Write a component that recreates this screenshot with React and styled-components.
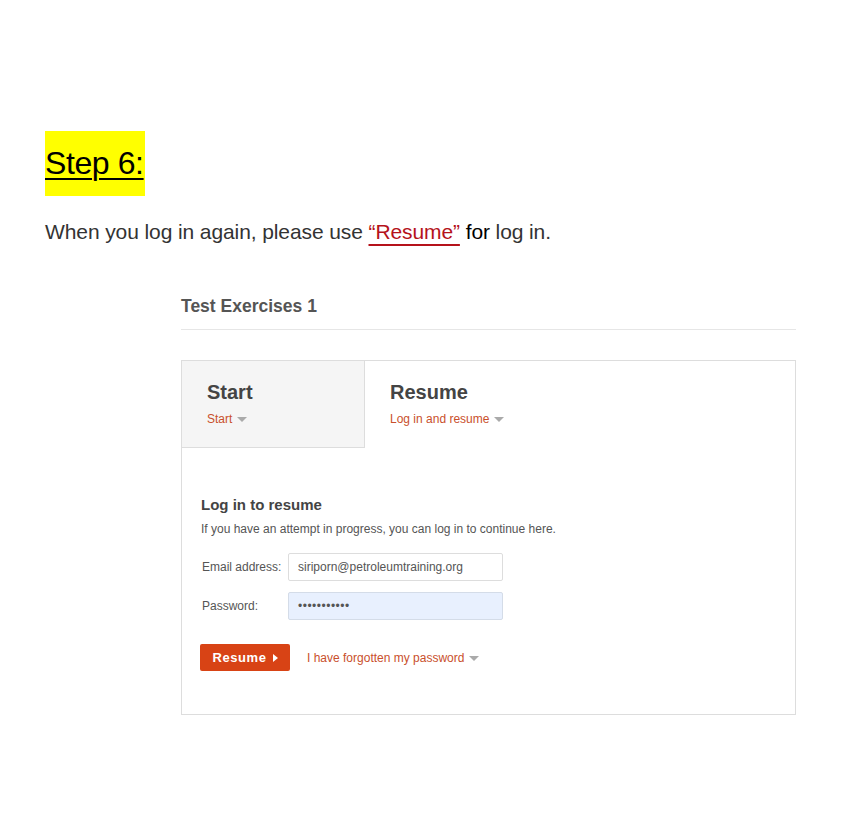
import React from "react"
import styled, { createGlobalStyle } from "styled-components"

const GlobalStyle = createGlobalStyle`
  body {
    margin: 0;
    background: #fff;
    font-family: "Liberation Sans", Arial, sans-serif;
  }
`

const Page = styled.div`
  width: 850px;
  min-height: 836px;
  padding: 131px 0 0 45px;
  box-sizing: border-box;
`

const StepBadge = styled.div`
  display: inline-block;
  background: #ffff00;
  height: 65px;
  line-height: 65px;
  padding-right: 1px;
  font-size: 32px;
  color: #000;
  text-decoration: underline;
  text-decoration-thickness: 2px;
  text-underline-offset: 4px;
  letter-spacing: -0.4px;
`

const Intro = styled.p`
  margin: 24px 0 0;
  font-size: 21px;
  color: #333;
  letter-spacing: -0.1px;

  .resume {
    color: #b5121b;
    text-decoration: underline;
    text-decoration-color: #b5121b;
    text-decoration-thickness: 2px;
    text-underline-offset: 5px;
  }
  .for {
    color: #000;
  }
`

const Shot = styled.div`
  margin: 52px 0 0 136px;
  width: 615px;
`

const Title = styled.h2`
  margin: 0;
  padding-bottom: 12px;
  font-size: 17.5px;
  font-weight: bold;
  color: #555;
  border-bottom: 1px solid #e6e6e6;
`

const Card = styled.div`
  margin-top: 30px;
  border: 1px solid #ddd;
  height: 355px;
  box-sizing: border-box;
`

const Tabs = styled.div`
  display: flex;
  height: 87px;
`

const Tab = styled.div`
  width: ${(p) => p.width}px;
  box-sizing: border-box;
  padding: 20px 0 0 25px;
  background: ${(p) => (p.active ? "#f5f5f5" : "#fff")};
  border-right: ${(p) => (p.active ? "1px solid #ddd" : "none")};
  border-bottom: ${(p) => (p.active ? "1px solid #ddd" : "none")};
`

const TabTitle = styled.div`
  font-size: 20px;
  font-weight: bold;
  color: #444;
`

const TabLink = styled.div`
  margin-top: 8px;
  font-size: 12px;
  color: #c9502c;
  display: flex;
  align-items: center;
  gap: 5px;
`

const Caret = styled.span`
  width: 0;
  height: 0;
  border-left: 5px solid transparent;
  border-right: 5px solid transparent;
  border-top: 5px solid #aaa;
  margin-top: 1px;
`

const Body = styled.div`
  padding: 48px 0 0 19px;
`

const FormTitle = styled.h3`
  margin: 0;
  font-size: 15px;
  font-weight: bold;
  color: #444;
`

const FormText = styled.p`
  margin: 9px 0 0;
  font-size: 12px;
  color: #555;
`

const Row = styled.div`
  display: flex;
  align-items: center;
  margin-top: ${(p) => p.top}px;
`

const Label = styled.label`
  width: 87px;
  padding-left: 1px;
  font-size: 12px;
  color: #555;
`

const Input = styled.div`
  width: 215px;
  height: 28px;
  box-sizing: border-box;
  margin-left: -1px;
  border: 1px solid ${(p) => (p.filled ? "#d4dce8" : "#ddd")};
  border-radius: 2px;
  background: ${(p) => (p.filled ? "#e8f0fe" : "#fff")};
  padding-left: 9px;
  display: flex;
  align-items: center;
  font-size: 12px;
  color: #555;
  letter-spacing: ${(p) => (p.filled ? "0.5px" : "0")};
`

const Actions = styled.div`
  display: flex;
  align-items: center;
  gap: 17px;
  margin-top: 24px;
  margin-left: -1px;
`

const Button = styled.div`
  width: 90px;
  height: 27px;
  box-sizing: border-box;
  background: #d84315;
  border-radius: 2px;
  color: #fff;
  font-size: 13px;
  font-weight: bold;
  letter-spacing: 0.6px;
  display: flex;
  align-items: center;
  justify-content: center;
  gap: 6px;
`

const Play = styled.span`
  width: 0;
  height: 0;
  border-top: 4px solid transparent;
  border-bottom: 4px solid transparent;
  border-left: 5px solid #fff;
`

const ForgotLink = styled.div`
  font-size: 12px;
  color: #c9502c;
  display: flex;
  align-items: center;
  gap: 5px;
`

export default function App() {
  return (
    <>
      <GlobalStyle />
      <Page>
        <StepBadge>Step 6:</StepBadge>
        <Intro>
          When you log in again, please use <span className="resume">“Resume”</span>{" "}
          <span className="for">for</span> log in.
        </Intro>
        <Shot>
          <Title>Test Exercises 1</Title>
          <Card>
            <Tabs>
              <Tab active width={183}>
                <TabTitle>Start</TabTitle>
                <TabLink>
                  Start <Caret />
                </TabLink>
              </Tab>
              <Tab width={430}>
                <TabTitle>Resume</TabTitle>
                <TabLink>
                  Log in and resume <Caret />
                </TabLink>
              </Tab>
            </Tabs>
            <Body>
              <FormTitle>Log in to resume</FormTitle>
              <FormText>If you have an attempt in progress, you can log in to continue here.</FormText>
              <Row top={17}>
                <Label>Email address:</Label>
                <Input>siriporn@petroleumtraining.org</Input>
              </Row>
              <Row top={11}>
                <Label>Password:</Label>
                <Input filled>•••••••••••</Input>
              </Row>
              <Actions>
                <Button>
                  Resume <Play />
                </Button>
                <ForgotLink>
                  I have forgotten my password <Caret />
                </ForgotLink>
              </Actions>
            </Body>
          </Card>
        </Shot>
      </Page>
    </>
  )
}
